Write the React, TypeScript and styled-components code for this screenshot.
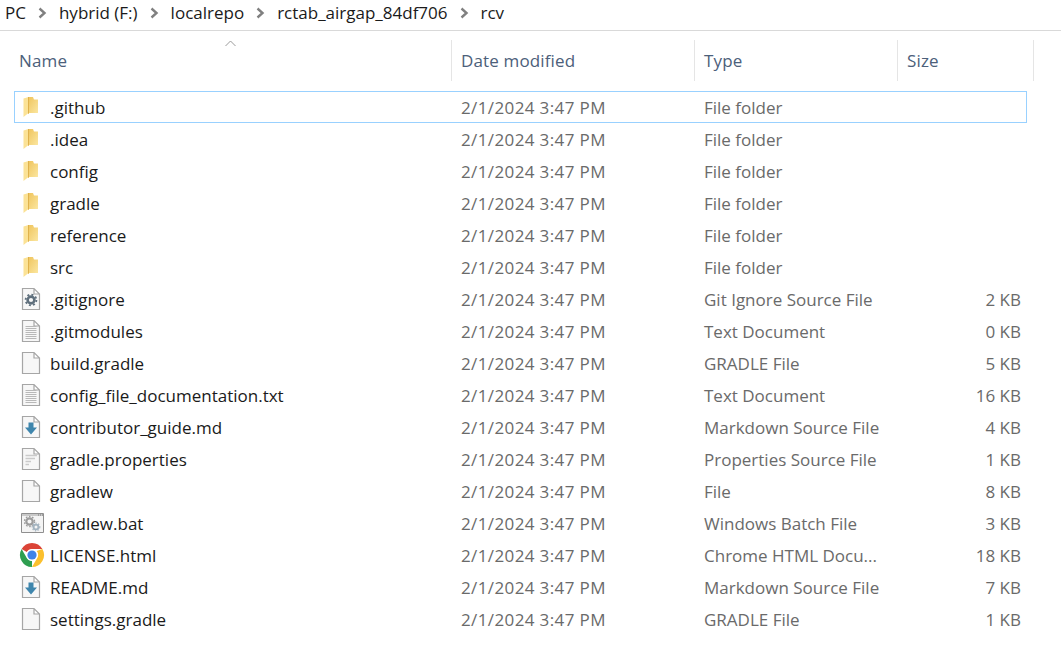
import React from 'react';
import styled, { createGlobalStyle } from 'styled-components';

const GlobalStyle = createGlobalStyle`
  html, body {
    margin: 0;
    padding: 0;
    background: #fff;
    overflow: hidden;
  }
  body {
    font-family: "Open Sans", "Noto Sans", "Liberation Sans", sans-serif;
  }
`;

const Window = styled.div`
  width: 1061px;
  height: 648px;
  display: flex;
  flex-direction: column;
  background: #fff;
`;

const AddressBar = styled.nav`
  height: 31px;
  box-sizing: border-box;
  border-bottom: 1px solid #d9d9d9;
  display: flex;
  align-items: center;
  padding: 0 0 5px 5px;
  font-size: 17px;
  color: #1a1a1a;
`;

const Crumb = styled.span`
  white-space: nowrap;
`;

const CrumbArrow = styled.svg`
  width: 9px;
  height: 12px;
  margin: 0 12px 0 12px;
  flex: none;
`;

const HeaderRow = styled.div`
  display: grid;
  grid-template-columns: 452px 243px 203px 136px;
  height: 41px;
  margin-top: 9px;
  position: relative;
`;

const HeaderCell = styled.div`
  box-sizing: border-box;
  border-right: 1px solid #e5e5e5;
  padding: 0 0 0 9px;
  display: flex;
  align-items: center;
  font-size: 17px;
  letter-spacing: 0.14px;
  color: #4c607a;
`;

const NameHeaderCell = styled(HeaderCell)`
  padding-left: 19px;
`;

const SortCaret = styled.svg`
  position: absolute;
  left: 225px;
  top: 0;
  width: 11px;
  height: 7px;
`;

const List = styled.div`
  margin: 10px 0 0 14px;
  width: 1013px;
  display: flex;
  flex-direction: column;
`;

const Row = styled.div<{ $selected?: boolean }>`
  height: 32px;
  box-sizing: border-box;
  border: 1px solid ${(p) => (p.$selected ? '#99d1ff' : 'transparent')};
  display: grid;
  grid-template-columns: 446px 243px 203px 1fr;
  align-items: center;
  font-size: 17px;
  color: #6a6a6a;
`;

const NameCell = styled.div`
  display: flex;
  align-items: center;
  color: #1a1a1a;
  white-space: nowrap;
`;

const IconSlot = styled.span`
  width: 35px;
  height: 30px;
  flex: none;
  display: flex;
  align-items: center;
  padding-left: 4px;
  box-sizing: border-box;
`;

const DateCell = styled.div`
  white-space: nowrap;
  letter-spacing: 0.38px;
`;

const TypeCell = styled.div`
  white-space: nowrap;
`;

const SizeCell = styled.div`
  text-align: right;
  padding-right: 5px;
  white-space: nowrap;
`;

const Svg = styled.svg`
  width: 26px;
  height: 26px;
  flex: none;
  margin-left: -1.5px;
`;

const ChromeSvg = styled(Svg)`
  margin-left: 0;
`;

const FolderSvg = styled(Svg)`
  margin-left: -2px;
`;

type IconKind = 'folder' | 'gear' | 'text' | 'blank' | 'md' | 'props' | 'bat' | 'chrome';

const PageOutline = () => (
  <path d="M4.5 2.5H16L21.5 8V23.5H4.5Z M16 2.5V8H21.5" fill="#f7f7f7" stroke="#a6a6a6" strokeWidth="1.2" />
);

const FileIcon = ({ kind }: { kind: IconKind }) => {
  if (kind === 'folder') {
    return (
      <FolderSvg viewBox="0 0 26 26">
        <defs>
          <linearGradient id="folderBack" x1="0" y1="0" x2="1" y2="1">
            <stop offset="0" stopColor="#efc45c" />
            <stop offset="1" stopColor="#fbe6a0" />
          </linearGradient>
        </defs>
        <path d="M11 3H16L17 5.5H21V19H11Z" fill="url(#folderBack)" />
        <path d="M6.5 4.5L11.5 3V19L6.5 23Z" fill="#fbe296" />
        <path d="M11 3H12V19.5L11 20Z" fill="#dfb24c" />
      </FolderSvg>
    );
  }
  if (kind === 'chrome') {
    return (
      <ChromeSvg viewBox="0 0 26 26">
        <path d="M13 1a12 12 0 0 1 10.4 6H13a6 6 0 0 0-5.2 3L2.6 7A12 12 0 0 1 13 1Z" fill="#db4437" />
        <path d="M23.4 7A12 12 0 0 1 13 25l5.2-9A6 6 0 0 0 17.6 9Z" fill="#fbc02d" />
        <path d="M2.6 7l5.2 9a6 6 0 0 0 5.2 3L13 25A12 12 0 0 1 2.6 7Z" fill="#2e9e50" />
        <circle cx="13" cy="13" r="5.8" fill="#fff" />
        <circle cx="13" cy="13" r="4.6" fill="#3f83e8" />
      </ChromeSvg>
    );
  }
  if (kind === 'bat') {
    return (
      <Svg viewBox="0 0 26 26">
        <path d="M3.5 3.5H25.5V22.5H3.5Z" fill="#f4f4f4" stroke="#8f8f8f" />
        <path d="M4 4H25V6H4Z" fill="#c9c9c9" />
        <path d="M20 5H21M22 5H23M24 5H25" stroke="#777" />
        <circle cx="11.5" cy="11.5" r="3.2" fill="none" stroke="#9c9c9c" strokeWidth="2.2" />
        <circle cx="11.5" cy="11.5" r="5" fill="none" stroke="#9c9c9c" strokeWidth="1.4" strokeDasharray="1.6 1.6" />
        <circle cx="18" cy="17" r="2.4" fill="none" stroke="#a4b4c0" strokeWidth="1.8" />
        <circle cx="18" cy="17" r="3.8" fill="none" stroke="#a4b4c0" strokeWidth="1.2" strokeDasharray="1.4 1.4" />
      </Svg>
    );
  }
  return (
    <Svg viewBox="0 0 26 26">
      <PageOutline />
      {kind === 'gear' && (
        <>
          <circle cx="13" cy="14" r="3.4" fill="none" stroke="#5f6f7c" strokeWidth="2.6" />
          <circle cx="13" cy="14" r="5.4" fill="none" stroke="#5f6f7c" strokeWidth="1.8" strokeDasharray="2 2.2" />
        </>
      )}
      {kind === 'text' && (
        <path
          d="M7.5 8.5H18.5M7.5 10.5H18.5M7.5 12.5H18.5M7.5 14.5H18.5M7.5 16.5H18.5M7.5 18.5H18.5M7.5 20.5H18.5"
          stroke="#b8b8b8"
          strokeWidth="1"
        />
      )}
      {kind === 'props' && (
        <path d="M7.5 9.5H19M7.5 12.5H17M7.5 15.5H13M7.5 18.5H11" stroke="#cacaca" strokeWidth="1.5" />
      )}
      {kind === 'md' && (
        <path d="M10.5 8.5H15.5V13.5H19L13 20.5L7 13.5H10.5Z" fill="#3f86ad" />
      )}
    </Svg>
  );
};

type Entry = { name: string; icon: IconKind; type: string; size?: string };

const folders = ['.github', '.idea', 'config', 'gradle', 'reference', 'src'];

const entries: Entry[] = [
  ...folders.map((name): Entry => ({ name, icon: 'folder', type: 'File folder' })),
  { name: '.gitignore', icon: 'gear', type: 'Git Ignore Source File', size: '2 KB' },
  { name: '.gitmodules', icon: 'text', type: 'Text Document', size: '0 KB' },
  { name: 'build.gradle', icon: 'blank', type: 'GRADLE File', size: '5 KB' },
  { name: 'config_file_documentation.txt', icon: 'text', type: 'Text Document', size: '16 KB' },
  { name: 'contributor_guide.md', icon: 'md', type: 'Markdown Source File', size: '4 KB' },
  { name: 'gradle.properties', icon: 'props', type: 'Properties Source File', size: '1 KB' },
  { name: 'gradlew', icon: 'blank', type: 'File', size: '8 KB' },
  { name: 'gradlew.bat', icon: 'bat', type: 'Windows Batch File', size: '3 KB' },
  { name: 'LICENSE.html', icon: 'chrome', type: 'Chrome HTML Docu...', size: '18 KB' },
  { name: 'README.md', icon: 'md', type: 'Markdown Source File', size: '7 KB' },
  { name: 'settings.gradle', icon: 'blank', type: 'GRADLE File', size: '1 KB' },
];

const crumbs = ['PC', 'hybrid (F:)', 'localrepo', 'rctab_airgap_84df706', 'rcv'];

export default function App() {
  return (
    <Window>
      <GlobalStyle />
      <AddressBar>
        {crumbs.map((c, i) => (
          <React.Fragment key={c}>
            {i > 0 && (
              <CrumbArrow viewBox="0 0 9 12">
                <path d="M1.5 1.5L6.5 6L1.5 10.5" fill="none" stroke="#808080" strokeWidth="2.4" />
              </CrumbArrow>
            )}
            <Crumb>{c}</Crumb>
          </React.Fragment>
        ))}
      </AddressBar>
      <HeaderRow>
        <SortCaret viewBox="0 0 11 7">
          <path d="M0.5 6L5.5 1L10.5 6" fill="none" stroke="#9a9a9a" strokeWidth="1" />
        </SortCaret>
        <NameHeaderCell>Name</NameHeaderCell>
        <HeaderCell>Date modified</HeaderCell>
        <HeaderCell>Type</HeaderCell>
        <HeaderCell>Size</HeaderCell>
      </HeaderRow>
      <List>
        {entries.map((e, i) => (
          <Row key={e.name} $selected={i === 0}>
            <NameCell>
              <IconSlot>
                <FileIcon kind={e.icon} />
              </IconSlot>
              {e.name}
            </NameCell>
            <DateCell>2/1/2024 3:47 PM</DateCell>
            <TypeCell>{e.type}</TypeCell>
            <SizeCell>{e.size}</SizeCell>
          </Row>
        ))}
      </List>
    </Window>
  );
}
